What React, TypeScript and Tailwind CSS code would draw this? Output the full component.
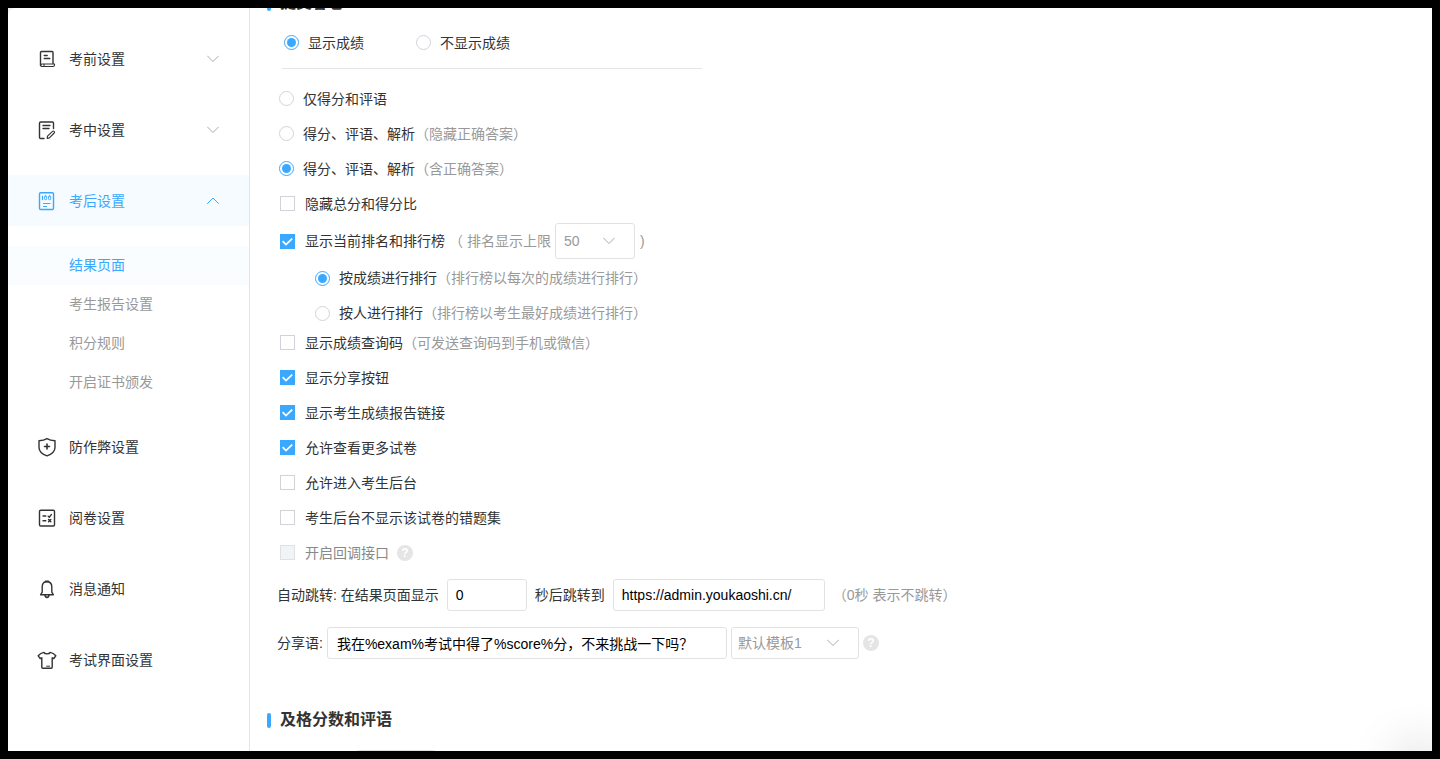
import React, { useState } from 'react';

interface MenuItem {
  id: string;
  label: string;
  icon: React.ReactNode;
  expandable?: boolean;
  children?: string[];
}

const iconProps = {
  width: 20,
  height: 20,
  viewBox: '0 0 20 20',
  fill: 'none',
  stroke: 'currentColor',
  strokeWidth: 1.4,
  strokeLinecap: 'round' as const,
  strokeLinejoin: 'round' as const,
  'aria-hidden': true,
};

const ScrollIcon = () => (
  <svg {...iconProps}>
    <path d="M3.500 16.500V3.500a1 1 0 0 1 1-1h10.500a1 1 0 0 1 1 1v11" />
    <path d="M5 15h12.500v1a1.500 1.500 0 0 1-1.500 1.500H5a1.250 1.250 0 1 1 0-2.500zM7 15.200v2" strokeWidth="1.100" />
    <path d="M7.200 6.500h3M7.200 9.500h5.600" />
  </svg>
);

const EditIcon = () => (
  <svg {...iconProps}>
    <path d="M7 18.500H3.700a1.200 1.200 0 0 1-1.200-1.200V3.200A1.200 1.200 0 0 1 3.700 2h11.600a1.200 1.200 0 0 1 1.200 1.200V8.500" />
    <path d="M6 5.500h7M6 8.500h6" />
    <path d="M10.200 18.400l.3-2.300 5-4.700a1.100 1.100 0 0 1 1.700 1.600l-4.800 4.900z" strokeWidth="1.100" />
  </svg>
);

const ScoreIcon = () => (
  <svg {...iconProps}>
    <rect x="2.500" y="1.700" width="14" height="16.800" rx="1.200" />
    <path d="M5.500 5v3.600M6.500 12.500h6.500M6.500 15.500h3" strokeWidth="1.200" />
    <rect x="7.500" y="4.900" width="2.200" height="3.800" rx="1" strokeWidth="1" />
    <rect x="11.500" y="4.900" width="2.200" height="3.800" rx="1" strokeWidth="1" />
  </svg>
);

const ShieldIcon = () => (
  <svg {...iconProps}>
    <path d="M10 1.600c2.400 1.500 5 2 8 2.200v6.400c0 4-3.300 7-8 8.600-4.700-1.600-8-4.600-8-8.600V3.800c3-.2 5.600-.7 8-2.200z" />
    <path d="M10 7v5M7.500 9.500h5" strokeWidth="1.600" />
  </svg>
);

const MarkIcon = () => (
  <svg {...iconProps}>
    <rect x="2.500" y="2.200" width="15" height="15.800" rx="1.200" />
    <path d="M6 8h2.800M6 12.800h2.800M11.200 8.200l1.100 1 2-2.600M11.600 11.600l2.200 2.200M13.800 11.600l-2.200 2.200" strokeWidth="1.400" />
  </svg>
);

const BellIcon = () => (
  <svg {...iconProps}>
    <path d="M10 2.800c-3 0-4.800 2.200-4.800 5v5.400l-1.600 2.600h12.800l-1.600-2.600V7.800c0-2.800-1.800-5-4.800-5z" />
    <path d="M8.600 2.400h2.800M8 16.200c.2 1.400.9 2.200 2 2.200s1.800-.8 2-2.200" strokeWidth="1.600" />
  </svg>
);

const ShirtIcon = () => (
  <svg {...iconProps}>
    <path d="M6.800 2.400c1 2 5.400 2 6.400 0 2.300.4 3.800 1.300 5.600 3.400l-2 2.700-1.600-.7v9.400a1 1 0 0 1-1 1H5.800a1 1 0 0 1-1-1V7.800l-1.600.7-2-2.700c1.800-2.100 3.300-3 5.600-3.400z" />
    <path d="M9.600 16.200h3" strokeWidth="1" />
  </svg>
);

const Chevron: React.FC<{ up?: boolean; className?: string }> = ({ up, className = '' }) => (
  <svg width="12" height="8" viewBox="0 0 12 8" fill="none" stroke="currentColor" strokeLinecap="round" strokeLinejoin="round" className={className} aria-hidden>
    <path d={up ? 'M0.500 6.500L6 1l5.500 5.500' : 'M0.500 1L6 6.500 11.500 1'} />
  </svg>
);

const menu: MenuItem[] = [
  { id: 'before', label: '考前设置', icon: <ScrollIcon />, expandable: true },
  { id: 'during', label: '考中设置', icon: <EditIcon />, expandable: true },
  {
    id: 'after',
    label: '考后设置',
    icon: <ScoreIcon />,
    expandable: true,
    children: ['结果页面', '考生报告设置', '积分规则', '开启证书颁发'],
  },
  { id: 'cheat', label: '防作弊设置', icon: <ShieldIcon /> },
  { id: 'marking', label: '阅卷设置', icon: <MarkIcon /> },
  { id: 'notice', label: '消息通知', icon: <BellIcon /> },
  { id: 'theme', label: '考试界面设置', icon: <ShirtIcon /> },
];

const Sidebar = () => (
  <nav className="w-[242px] shrink-0 rounded-tl-lg border-r border-[#e4e4e4] bg-white pt-[25px] flex flex-col gap-5">
    {menu.map(item => (
      <React.Fragment key={item.id}>
        <button
          type="button"
          className={`h-[51px] w-full shrink-0 flex items-center pl-[29px] pr-[30px] text-left ${item.children ? 'bg-[#f5fbff] text-[#3aa8ff]' : ''}`}
        >
          {item.icon}
          <span className="ml-3 flex-1">{item.label}</span>
          {item.expandable && (
            <Chevron up={!!item.children} className={item.children ? '' : 'text-[#aaa]'} />
          )}
        </button>
        {item.children && (
          <ul className="-mb-px shrink-0">
            {item.children.map((child, i) => (
              <li key={child}>
                <a
                  href="#"
                  className={`flex h-[39px] items-center pb-px pl-[61px] ${i === 0 ? 'bg-[#f9fdff] text-[#3aa8ff]' : 'text-[#999]'}`}
                >
                  {child}
                </a>
              </li>
            ))}
          </ul>
        )}
      </React.Fragment>
    ))}
  </nav>
);

interface RadioProps {
  name: string;
  label: string;
  hint?: string;
  checked: boolean;
  onChange: () => void;
}

const Radio: React.FC<RadioProps> = ({ name, label, hint, checked, onChange }) => (
  <label className="flex items-center">
    <input
      type="radio"
      name={name}
      checked={checked}
      onChange={onChange}
      className="mr-[9px] size-[15px] shrink-0 appearance-none rounded-full border border-[#d0d4da] bg-white p-[2px] bg-clip-content checked:border-[#3aa8ff] checked:bg-[#3aa8ff]"
    />
    {label}
    {hint && <span className="text-[#999]">{hint}</span>}
  </label>
);

interface CheckProps {
  label: string;
  hint?: string;
  defaultChecked?: boolean;
  disabled?: boolean;
}

const Check: React.FC<CheckProps> = ({ label, hint, defaultChecked, disabled }) => (
  <label className={`flex items-center ${disabled ? 'text-[#888]' : ''}`}>
    <span className="relative mr-[10px] flex size-[15px]">
      <input
        type="checkbox"
        defaultChecked={defaultChecked}
        disabled={disabled}
        className="peer size-full appearance-none border border-[#d0d4da] bg-white checked:border-[#3aa8ff] checked:bg-[#3aa8ff] disabled:border-[#dfe1e6] disabled:bg-[#f2f3f6]"
      />
      <svg viewBox="0 0 15 15" fill="none" stroke="white" strokeWidth="1.800" className="pointer-events-none absolute inset-0 hidden peer-checked:block" aria-hidden>
        <path d="M2.600 7.200l3.400 3.400 6.200-6" />
      </svg>
    </span>
    {label}
    {hint && <span className="text-[#999]">{hint}</span>}
  </label>
);

const Help = () => (
  <button type="button" aria-label="帮助" className="flex size-4 items-center justify-center rounded-full bg-[#e5e5e5] text-xs font-bold text-white">
    ?
  </button>
);

const Heading: React.FC<{ children: React.ReactNode }> = ({ children }) => (
  <h2 className="flex h-6 items-center gap-[9px] text-base font-bold">
    <span className="h-[15px] w-1 rounded-sm bg-[#3aa8ff]" />
    {children}
  </h2>
);

const row = 'flex h-[35px] items-center';
const field = 'rounded-[3px] border border-[#e2e2e2] bg-white';

const App = () => {
  const [show, setShow] = useState(true);
  const [detail, setDetail] = useState(2);
  const [rankBy, setRankBy] = useState(0);

  return (
    <div className="h-screen bg-black p-2 text-sm leading-5 text-[#333] font-['Liberation_Sans','Noto_Sans_CJK_SC',sans-serif]">
      <div className="relative flex h-full overflow-hidden bg-[#f0f0f7]">
        <Sidebar />
        <main className="min-w-0 flex-1 bg-white pl-[17px]">
          <div className="-mt-[17px]">
            <Heading>提交答卷</Heading>
          </div>

          <div className="mt-[10px] ml-[17px] flex h-[35px] items-center gap-[52px]">
            <Radio name="show" label="显示成绩" checked={show} onChange={() => setShow(true)} />
            <Radio name="show" label="不显示成绩" checked={!show} onChange={() => setShow(false)} />
          </div>
          <hr className="mt-2 ml-[15px] max-w-[420px] border-[#e5e5e5]" />

          <div className="mt-3 pl-3">
            <div className={row}>
              <Radio name="detail" label="仅得分和评语" checked={detail === 0} onChange={() => setDetail(0)} />
            </div>
            <div className={row}>
              <Radio name="detail" label="得分、评语、解析" hint="（隐藏正确答案）" checked={detail === 1} onChange={() => setDetail(1)} />
            </div>
            <div className={row}>
              <Radio name="detail" label="得分、评语、解析" hint="（含正确答案）" checked={detail === 2} onChange={() => setDetail(2)} />
            </div>
          </div>

          <div className="pl-[13px]">
            <div className={row}>
              <Check label="隐藏总分和得分比" />
            </div>
            <div className="flex h-10 items-center">
              <Check label="显示当前排名和排行榜" defaultChecked />
              <label htmlFor="limit" className="ml-1 text-[#999]">（ 排名显示上限</label>
              <span className="relative ml-1 mr-[5px]">
                <select id="limit" className={`h-9 w-20 appearance-none pl-2 text-[#999] ${field}`}>
                  <option>50</option>
                  <option>100</option>
                </select>
                <Chevron className="pointer-events-none absolute top-[14px] right-5 text-[#aaa]" />
              </span>
              <span className="text-[#999]">)</span>
            </div>
            <div className="flex flex-col gap-[11px] pt-[5px] pl-[35px]">
              <div className="flex h-6 items-center">
                <Radio name="rank" label="按成绩进行排行" hint="（排行榜以每次的成绩进行排行）" checked={rankBy === 0} onChange={() => setRankBy(0)} />
              </div>
              <div className="flex h-6 items-center">
                <Radio name="rank" label="按人进行排行" hint="（排行榜以考生最好成绩进行排行）" checked={rankBy === 1} onChange={() => setRankBy(1)} />
              </div>
            </div>
            <div className={row}>
              <Check label="显示成绩查询码" hint="（可发送查询码到手机或微信）" />
            </div>
            <div className={row}>
              <Check label="显示分享按钮" defaultChecked />
            </div>
            <div className={row}>
              <Check label="显示考生成绩报告链接" defaultChecked />
            </div>
            <div className={row}>
              <Check label="允许查看更多试卷" defaultChecked />
            </div>
            <div className={row}>
              <Check label="允许进入考生后台" />
            </div>
            <div className={row}>
              <Check label="考生后台不显示该试卷的错题集" />
            </div>
            <div className={`${row} gap-2`}>
              <Check label="开启回调接口" disabled />
              <Help />
            </div>
          </div>

          <div className="mt-[9px] flex items-center gap-2 pl-[10px]">
            <label htmlFor="delay">自动跳转: 在结果页面显示</label>
            <input id="delay" defaultValue="0" className={`h-8 w-20 px-2 text-black ${field}`} />
            <label htmlFor="target">秒后跳转到</label>
            <input id="target" defaultValue="https://admin.youkaoshi.cn/" className={`h-8 w-[212px] px-2 text-black ${field}`} />
            <span className="text-[#999]">（0秒 表示不跳转）</span>
          </div>

          <div className="mt-4 flex items-center gap-1 pl-[10px]">
            <label htmlFor="share">分享语:</label>
            <input id="share" defaultValue="我在%exam%考试中得了%score%分，不来挑战一下吗？" className={`h-8 w-[400px] px-[9px] text-black ${field}`} />
            <span className="relative">
              <select aria-label="模板" className={`h-8 w-32 appearance-none pl-[6px] text-[#999] ${field}`}>
                <option>默认模板1</option>
              </select>
              <Chevron className="pointer-events-none absolute top-3 right-5 text-[#aaa]" />
            </span>
            <Help />
          </div>

          <div className="mt-[49px]">
            <Heading>及格分数和评语</Heading>
            <input aria-label="及格分数" className={`mt-[18px] ml-[89px] h-8 w-20 px-2 ${field}`} />
          </div>
        </main>
        <div className="pointer-events-none absolute right-0 -bottom-4 h-2 w-6 shadow-[0_0_48px_12px_rgba(0,0,0,0.16)]" />
      </div>
    </div>
  );
};

export default App;
